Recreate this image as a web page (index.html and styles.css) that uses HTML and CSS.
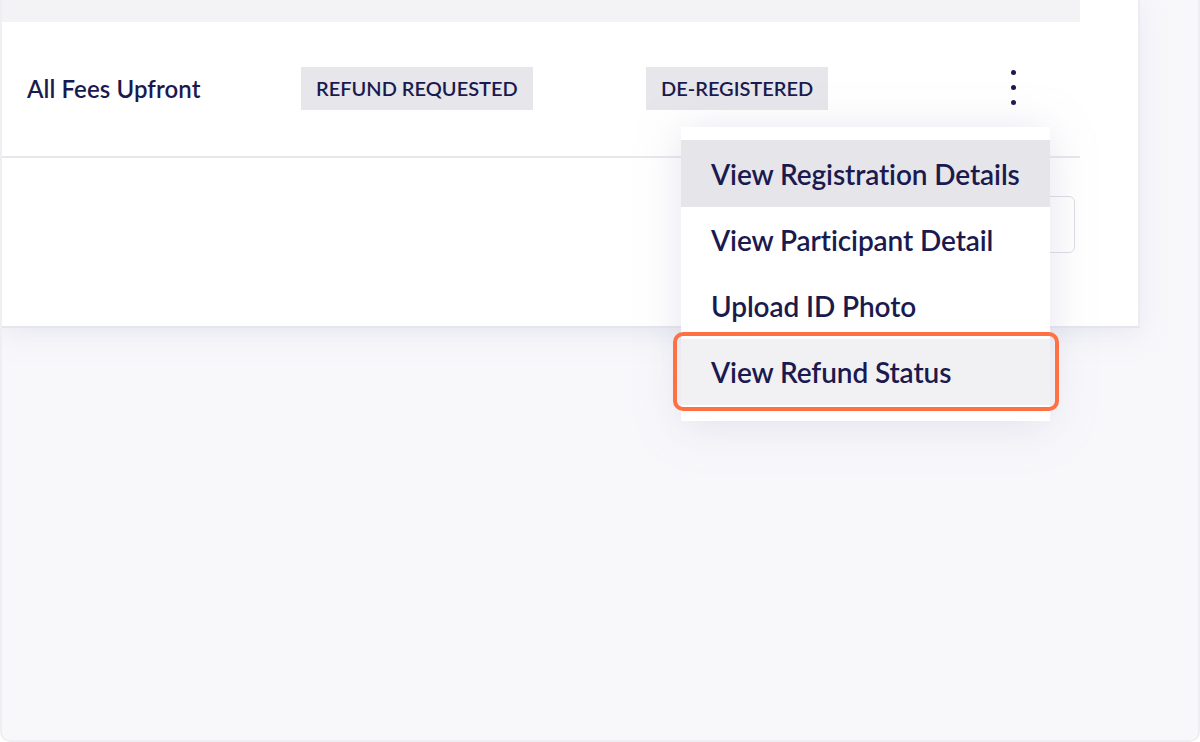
FILE: index.html
```html
<!DOCTYPE html>
<html>
<head>
<meta charset="utf-8">
<link rel="stylesheet" href="styles.css">
</head>
<body>
<div class="frame">
  <div class="card">
    <div class="main">
      <div class="top-strip"></div>
      <div class="row">
        <div class="cell name">All Fees Upfront</div>
        <div class="cell"><span class="badge">REFUND REQUESTED</span></div>
        <div class="cell"><span class="badge">DE-REGISTERED</span></div>
        <div class="cell kebab"><span></span><span></span><span></span></div>
      </div>
      <div class="footer">
        <div class="btn"></div>
      </div>
    </div>
  </div>
  <div class="menu">
    <div class="item active">View Registration Details</div>
    <div class="item">View Participant Detail</div>
    <div class="item">Upload ID Photo</div>
    <div class="item refund">View Refund Status</div>
  </div>
  <div class="highlight"></div>
</div>
</body>
</html>
```
FILE: styles.css
```css
* { box-sizing: border-box; }
html, body { margin: 0; padding: 0; }
body {
  width: 1200px;
  height: 742px;
  overflow: hidden;
  font-family: Lato, "Liberation Sans", sans-serif;
  color: #1b1a4e;
}
.frame {
  position: relative;
  width: 1200px;
  height: 742px;
  background: #f8f8fb;
  border: 2px solid #efeff3;
  border-top: none;
  border-radius: 0 0 10px 10px;
  overflow: hidden;
}
.card {
  width: 1138px;
  height: 328px;
  background: #fff;
  border-right: 2px solid #ececf1;
  border-bottom: 2px solid #e5e5eb;
  box-shadow: 0 6px 24px rgba(200, 200, 225, 0.35);
}
.main {
  width: 1078px;
}
.top-strip {
  height: 22px;
  background: #f3f3f6;
}
.row {
  height: 136px;
  display: grid;
  grid-template-columns: 274px 345px 1fr 79px;
  align-items: center;
  padding-left: 25px;
  border-bottom: 2px solid #e7e7ec;
}
.name {
  font-size: 24px;
  font-weight: 600;
  letter-spacing: 0.1px;
  padding-bottom: 1px;
}
.badge {
  display: inline-block;
  background: #e6e6eb;
  font-size: 20px;
  font-weight: 600;
  letter-spacing: 0;
  padding: 0 15px;
  line-height: 43px;
  height: 43px;
}
.cell { display: flex; align-items: center; }
.row .cell:nth-child(2), .row .cell:nth-child(3) { margin-top: -2px; }
.kebab {
  flex-direction: column;
  gap: 10px;
  align-items: flex-start;
  padding-left: 10px;
  margin-top: -4px;
}
.kebab span {
  width: 5px;
  height: 5px;
  border-radius: 50%;
  background: #1b1a4e;
}
.footer {
  height: 168px;
  display: flex;
  justify-content: flex-end;
  padding-top: 38px;
  padding-right: 5px;
}
.btn {
  width: 80px;
  height: 57px;
  border: 1.5px solid #dcdce4;
  border-radius: 6px;
}
.menu {
  position: absolute;
  left: 679px;
  top: 127px;
  width: 369px;
  padding: 13px 0 16px;
  background: #fff;
  box-shadow: 0 4px 40px rgba(180, 180, 210, 0.35);
}
.item {
  height: 66px;
  display: flex;
  align-items: center;
  padding-left: 30px;
  font-size: 28px;
  font-weight: 600;
  letter-spacing: -0.1px;
}
.item.active { background: #e6e5ea; height: 67px; }
.item.refund { background: #f1f1f4; }
.highlight {
  position: absolute;
  left: 671px;
  top: 332px;
  width: 386px;
  height: 79px;
  border: 4px solid #ff7043;
  border-radius: 10px;
}
```
